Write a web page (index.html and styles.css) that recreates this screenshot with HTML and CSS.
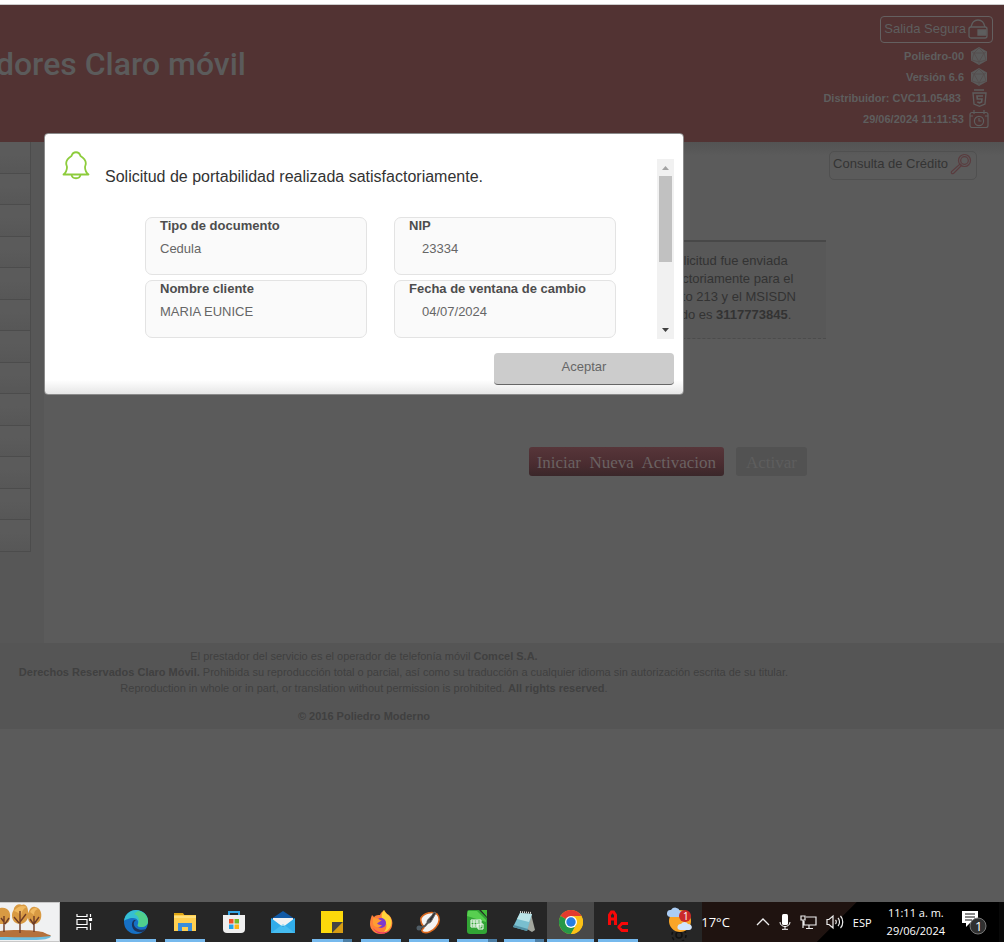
FILE: index.html
```html
<!DOCTYPE html>
<html lang="es">
<head>
<meta charset="utf-8">
<title>Poliedro - Claro móvil</title>
<link rel="stylesheet" href="styles.css">
</head>
<body>
<div class="screen">
  <header class="header">
    <h1 class="title">dores Claro móvil</h1>
    <div class="session">
      <button class="logout" type="button">Salida Segura
        <svg width="20" height="22" viewBox="0 0 20 22" fill="none" stroke="currentColor" stroke-width="1.3"><rect x="1" y="9" width="18" height="11" rx="2"/><path d="M3 9C4 4 7 2 10 2s6 2 7 7"/><path d="M10 12h8v5h-8z" fill="currentColor"/></svg>
      </button>
      <p class="info">Poliedro-00
        <svg width="20" height="18" viewBox="0 0 20 18"><path d="M10 0l8 4.500v9L10 18l-8-4.500v-9z" fill="#5b5b5b"/><path d="M10 1L5 6l5 9 5-9zM3 5l2 1-2 7 7 2 7-2-2-7 2-1M5 6h10M10 15v2" fill="none" stroke="#554b4b" stroke-width=".7"/></svg>
      </p>
      <p class="info">Versión 6.6
        <svg width="20" height="18" viewBox="0 0 20 18"><path d="M10 0l8 4.500v9L10 18l-8-4.500v-9z" fill="#5b5b5b"/><path d="M10 1L5 6l5 9 5-9zM3 5l2 1-2 7 7 2 7-2-2-7 2-1M5 6h10M10 15v2" fill="none" stroke="#554b4b" stroke-width=".7"/></svg>
      </p>
      <p class="info">Distribuidor: CVC11.05483&nbsp;
        <svg width="20" height="18" viewBox="0 0 20 18" fill="none" stroke="#5e5e5e" stroke-width="1.300"><path d="M5 1h10M4 4h13l-1 11-5.500 2.300L5 15z"/><path d="M14 7H8l.3 3H13l-.4 3-2.100.8-2.200-.8" stroke-width="1.600"/></svg>
      </p>
      <p class="info">29/06/2024 11:11:53
        <svg width="20" height="18" viewBox="0 0 20 18" fill="none" stroke="#5e5e5e" stroke-width="1.200"><rect x="1" y="2.500" width="18" height="15" rx="2"/><path d="M1 6h3m12 0h3M5 0v4M15 0v4M10 8v3h2.500"/><circle cx="10" cy="11" r="4.600"/></svg>
      </p>
    </div>
  </header>

  <main class="main">
    <ul class="menu"><li></li><li></li><li></li><li></li><li></li><li></li><li></li><li></li><li></li><li></li><li></li><li></li><li></li></ul>
    <section class="content">
      <div class="tools">
        <button class="credit" type="button">Consulta de Crédito
          <svg width="22" height="22" viewBox="0 0 22 22" fill="none" stroke="#5a3c3f" stroke-width="1.200"><circle cx="14.500" cy="7.500" r="6"/><circle cx="14.500" cy="7.500" r="3.800"/><path d="M10 11l1.500 1.500-8 8c-1.500.7-2.700-.5-2-2z"/></svg>
        </button>
      </div>
      <div class="workspace">
        <div class="notice">
          <span>Su solicitud fue enviada</span>
          <span>satisfactoriamente para el</span>
          <span>producto 213 y el MSISDN</span>
          <span>activado es <b>3117773845</b>.</span>
        </div>
        <div class="actions">
          <button class="start" type="button">Iniciar&nbsp; Nueva&nbsp; Activacion</button>
          <button class="activate" type="button">Activar</button>
        </div>
      </div>
    </section>
  </main>

  <footer class="footer">
    <p>El prestador del servicio es el operador de telefonía móvil <b>Comcel S.A.</b></p>
    <p class="rights"><b>Derechos Reservados Claro Móvil.</b> Prohibida su reproducción total o parcial, así como su traducción a cualquier idioma sin autorización escrita de su titular.</p>
    <p>Reproduction in whole or in part, or translation without permission is prohibited. <b>All rights reserved</b>.</p>
    <p class="copy"><b>© 2016 Poliedro Moderno</b></p>
  </footer>

  <div class="dialog" role="dialog" aria-labelledby="dialog-title">
    <div class="dialog-body">
      <svg class="bell" width="28" height="29" viewBox="0 0 28 29" fill="none" stroke="#8dcc3c" stroke-width="1.800" stroke-linejoin="round"><path d="M1.500 23.500c2.500-2 3.500-4 3.500-7.500 0-1-1-2-.8-4C4.500 8 7 6.500 9.500 5 11 0 17 0 18.500 5c2.500 1.500 5 3 5.300 7 .2 2-.8 3-.8 4 0 3.500 1 5.500 3.500 7.500z"/><path d="M9.500 23.500c.5 5 8.500 5 9 0"/></svg>
      <div class="dialog-content">
        <h2 class="dialog-title" id="dialog-title">Solicitud de portabilidad realizada satisfactoriamente.</h2>
        <dl class="fields">
          <div class="field"><dt>Tipo de documento</dt><dd>Cedula</dd></div>
          <div class="field indent"><dt>NIP</dt><dd>23334</dd></div>
          <div class="field"><dt>Nombre cliente</dt><dd>MARIA EUNICE</dd></div>
          <div class="field indent"><dt>Fecha de ventana de cambio</dt><dd>04/07/2024</dd></div>
        </dl>
      </div>
      <div class="scrollbar">
        <svg width="17" height="17" viewBox="0 0 17 17"><path d="M5 11h7L8.500 7z" fill="#a3a3a3"/></svg>
        <div class="thumb"></div>
        <svg class="down" width="17" height="17" viewBox="0 0 17 17"><path d="M5 6h7l-3.500 4z" fill="#404040"/></svg>
      </div>
    </div>
    <button class="accept" type="button">Aceptar</button>
  </div>

  <nav class="taskbar">
    <svg class="trees" width="60" height="40" viewBox="0 0 60 40"><path d="M0 0h60v40H0z" fill="#c8c8c8"/><path d="M0 1h59v38H0z" fill="#f0f1f2"/><path d="M0 34h51c-1 3-8 4-18 4H0z" fill="#6fbfe0"/><path d="M0 29c15-2 35-1 43 1 3 2 8 3 8 4-12 2-32 1-51 1z" fill="#b5713c"/><path d="M0 6c8-2 11 5 10 9 0 5-3 7-6 7H0zM12 14c0-5 2-5 2-8 3-5 6-4 8-3 4-2 6 3 6 6 2 8-3 13-8 13-4 0-8-3-8-8zM28 15c0-6 3-11 7-10 6 1 7 7 6 11-1 4-4 6-7 6-4 0-6-3-6-7z" fill="#d89a43"/><path d="M14 9c4-5 8-6 13-4-3 1-5 3-6 9-2-3-4-4-7-5zM30 10c2-4 5-5 8-3-3 1-4 3-4 6z" fill="#f0b961"/><path d="M4 30V14M5 22l4-6M4 20l-3-4M20 31V9M19 21l-5-6M20 20l6-8M34 30V14M34 22l5-7M34 23l-4-6" fill="none" stroke="#6f3c26" stroke-width="1.400"/></svg>
    <button class="task-view" type="button" aria-label="Vista de tareas"><svg width="17" height="16" viewBox="0 0 17 16" fill="none" stroke="#fff" stroke-width="1.200"><path d="M1 0v2.500h10V0M1 16v-2.500h10V16M1 5.500h10v5H1zM14.500 0v3M14.500 9v7"/><path d="M13.500 4.500h2v2h-2z" fill="#fff"/></svg></button>
    <div class="apps">
      <button class="app open" type="button" aria-label="Edge"><svg width="24" height="24" viewBox="0 0 24 24"><circle cx="12" cy="12" r="12" fill="#1670c5"/><path d="M0 11C1 4 6 0 12 0c7 0 12 5 12 11 0 4-3 6-7 6-3 0-4-1-3-3 1-3-1-6-5-6-4 0-8 2-9 3z" fill="#35bfd3"/><path d="M14 1c6 1 10 5 10 10 0 4-3 6-7 6-3 0-4-1-3-3 2-4 1-8-4-10z" fill="#5ad676" opacity=".75"/><path d="M10 10c-4 3-2 11 4 12 4 .7 7-1 8-3-5 2-11 0-12-4-.5-2 0-4 2-5z" fill="#1b335c"/></svg></button>
      <button class="app open" type="button" aria-label="Explorador"><svg width="24" height="24" viewBox="0 0 24 24"><path d="M1 3h9l2 3H1z" fill="#dda514"/><path d="M1 5h22v16H1z" fill="#ffcf50"/><path d="M1 6h22v2H1z" fill="#ffe07b"/><path d="M5 21v-8h14v8h-4v-4H9v4z" fill="#398ddb"/></svg></button>
      <button class="app" type="button" aria-label="Store"><svg width="24" height="24" viewBox="0 0 24 24"><path d="M7 6V2h10v4" fill="none" stroke="#33a5e5" stroke-width="2"/><path d="M1 5h22v14q0 4-4 4H5q-4 0-4-4z" fill="#efefef"/><path d="M7 9h4.500v4.500H7z" fill="#ef5127"/><path d="M12.500 9H17v4.500h-4.500z" fill="#75b928"/><path d="M7 14.500h4.500V19H7z" fill="#24a5e8"/><path d="M12.500 14.500H17V19h-4.500z" fill="#fdb515"/></svg></button>
      <button class="app" type="button" aria-label="Correo"><svg width="26" height="24" viewBox="0 0 26 24"><path d="M1 9l12-8 12 8v13H1z" fill="#1059a5"/><path d="M3 8h20v8H3z" fill="#f1f1f1"/><path d="M1 8l12 9 12-9v15H1z" fill="#31adea"/><path d="M1 23l12-9 12 9z" fill="#54c6f3" opacity=".6"/></svg></button>
      <button class="app open stack" type="button" aria-label="Notas"><svg width="24" height="24" viewBox="0 0 24 24"><path d="M1 1h22v22H1z" fill="#fdd90b"/><path d="M12 23h11V12z" fill="#d79d14"/><path d="M12 23V12h11z" fill="#444"/></svg></button>
      <button class="app open" type="button" aria-label="Firefox"><svg width="24" height="24" viewBox="0 0 24 24"><path d="M3 5l2 2c2-2 4-2 6-2 1-3 4-4 4-5l3 4 2 1c3 3 4 7 3 11-1 5-6 8-11 8C5 24 1 19 1 14c0-4 1-6 2-9z" fill="#ff803a"/><path d="M15 0c1 4 6 5 7 9 2 6-2 12-7 13 4-4 3-11-2-14-1-2 0-6 2-8z" fill="#ffd43b"/><path d="M4 18c3 6 11 8 17 2-3 3-12 4-17-2z" fill="#e92b70"/><circle cx="12" cy="13" r="5" fill="#7d3bcf"/><path d="M4 8c4 0 6 1 9 3-3 0-3 2-5 2 1 2 3 2 5 2-3 4-9 2-9-2z" fill="#ff9d32"/></svg></button>
      <button class="app open" type="button" aria-label="Herramienta"><svg width="26" height="24" viewBox="0 0 26 24"><path d="M5 8C8 3 16 1 21 4c3 3 3 9-1 13-3 4-9 7-13 5-3-2 1-3 1-5-2-2-4-5-3-9z" fill="#f4f4f4" stroke="#db681d" stroke-width="1.600"/><path d="M18 2l2 1-4 7c-1 3-4 4-5 2 0-3 4-4 7-10z" fill="#303336" stroke="#666"/><path d="M3 18l6-2 5-6" fill="none" stroke="#555" stroke-width="2"/><circle cx="3" cy="18" r="2.500" fill="#505d66"/></svg></button>
      <button class="app open stack" type="button" aria-label="Calc"><svg width="24" height="24" viewBox="0 0 24 24"><path d="M4 0h10l8 8v13q0 3-3 3H5q-3 0-3-3V3q0-3 2-3z" fill="#32a535"/><path d="M3 1h9l9 9v2L2 6z" fill="#58cf50"/><path d="M16 0h6v7z" fill="#42bd39"/><path d="M6 10h10v7H6zM6 12h10M6 15h10M9 10v7M12 10v7M13 14h5v5h-5z" fill="none" stroke="#fff"/></svg></button>
      <button class="app open stack" type="button" aria-label="Bloc de notas"><svg width="24" height="24" viewBox="0 0 24 24"><path d="M19 4l4 16-3 2-5-3z" fill="#a3a69e"/><path d="M8 3l12 1-5 17-14-4z" fill="#79bfcf"/><path d="M8 3l12 1-3 8L5 9z" fill="#bce4e8"/><path d="M2 15l14 4-1 2-14-4z" fill="#518fa3"/><path d="M8 2l12 1" stroke="#d7d8d3" stroke-width="2" stroke-dasharray="1 1"/></svg></button>
      <button class="app open active" type="button" aria-label="Chrome"><svg width="24" height="24" viewBox="0 0 24 24"><circle cx="12" cy="12" r="12" fill="#fbc116"/><path d="M12 12L1.600 6A12 12 0 0 1 22.400 6z" fill="#e33b2e"/><path d="M12 12L1.600 6a12 12 0 0 0 10.400 18l5-9z" fill="#279847"/><path d="M12 6h10.400A12 12 0 0 1 12 24l5-9z" fill="#fbc116"/><circle cx="12" cy="12" r="6" fill="#fff"/><circle cx="12" cy="12" r="4.700" fill="#287de1"/></svg></button>
      <button class="app open" type="button" aria-label="AC"><svg width="24" height="24" viewBox="0 0 24 24" fill="none" stroke="#f80808" stroke-width="3"><path d="M3.500 15V5l2-3h2l2 3v10M4 9h5M22 13.500h-6l-3 3v1l3 3h6"/></svg></button>
    </div>
    <div class="tray">
      <div class="weather"><svg width="26" height="38" viewBox="0 0 26 38"><g fill="none" stroke="#111" stroke-width="1.500"><circle cx="12" cy="32" r="3"/><circle cx="12" cy="32" r="7" stroke-dasharray="3 2.500"/></g><circle cx="13" cy="18" r="11" fill="#f9a527"/><path d="M3 14a3.500 3.500 0 0 1 1-7 5 5 0 0 1 9 1c4 0 4 6 0 6z" fill="#abcdf4"/><path d="M13 27a3 3 0 0 1 1-6 4 4 0 0 1 7 0c5 0 5 6 1 6z" fill="#d1e5fc"/><circle cx="18" cy="13" r="6" fill="#cb2929"/><text x="16" y="17" class="badge">1</text></svg><span>17°C</span></div>
      <svg width="14" height="14" viewBox="0 0 14 14" fill="none" stroke="#eee" stroke-width="1.300"><path d="M1 10l6-6 6 6"/></svg>
      <svg width="12" height="16" viewBox="0 0 12 16"><rect x="3" width="6" height="11" rx="1.500" fill="#fff"/><path d="M1 8c0 6 10 6 10 0M6 12v3M3 15.300h6" fill="none" stroke="#fff"/></svg>
      <svg width="17" height="16" viewBox="0 0 17 16" fill="none" stroke="#eee" stroke-width="1.200"><path d="M6 3h10v8H4V7M9 11v3M6 14.500h7M1 2h4v4H1zM3 6v8"/></svg>
      <svg width="18" height="16" viewBox="0 0 18 16" fill="none" stroke="#eee" stroke-width="1.200"><path d="M1 5.500h2L7 2v12l-4-3.500H1zM9.500 6c1 1 1 3 0 4M12 4c2 2 2 6 0 8M14.500 2c3 3 3 9 0 12"/></svg>
      <span class="lang">ESP</span>
      <time class="clock">11:11 a. m.<br>29/06/2024</time>
      <svg width="26" height="26" viewBox="0 0 26 26"><path d="M1 2h16v12H9l-4 4v-4H1z" fill="#fff"/><path d="M4 5h10M4 8h10M4 11h7" stroke="#111"/><circle cx="17" cy="17" r="8" fill="#303030" stroke="#777"/><text x="14" y="22" class="count">1</text></svg>
    </div>
  </nav>
</div>
</body>
</html>
```
FILE: styles.css
```css
* { box-sizing: border-box; }
body { margin: 0; background: #5b5b5b; font-family: "Liberation Sans", Arial, sans-serif; font-size: 13px; }
button { font: inherit; margin: 0; padding: 0; border: 0; background: none; color: inherit; }
h1, h2, p, ul, dl, dd { margin: 0; padding: 0; }
svg { display: block; flex: none; }

.screen { position: relative; min-height: 100vh; display: flex; flex-direction: column; overflow: hidden; border-top: 4px solid #fff; }

.header { display: flex; justify-content: space-between; min-height: 138px; padding-right: 11px; background: #523333; border-top: 1px solid #ccc; color: #5e5e5e; }
.title { display: flex; justify-content: flex-end; width: 246px; padding-top: 40px; white-space: nowrap; font: 500 32px/38px Roboto, sans-serif; color: #5b5b5b; }
.session { display: flex; flex-direction: column; align-items: flex-end; padding-top: 11px; }
.logout { display: flex; align-items: center; gap: 2px; height: 27px; margin-bottom: 2px; padding: 0 4px 2px 3px; border: 1px solid #646060; border-radius: 4px; }
.info { display: flex; align-items: center; gap: 5px; height: 21px; padding-right: 4px; font-size: 11px; font-weight: bold; }

.main { display: flex; gap: 13px; min-height: 501px; background: linear-gradient(90deg, #575757 44px, #5b5b5b 44px); }
.menu { align-self: flex-start; display: grid; grid-auto-rows: 1fr; width: 31px; min-height: 410px; border-right: 1px solid #4c4c4c; list-style: none; }
.menu li { border-bottom: 1px solid #4c4c4c; background: linear-gradient(#5b5b5b 40%, #575757); }
.content { flex: 1; background: linear-gradient(#535353, #5b5b5b 14px); }
.tools { display: flex; justify-content: flex-end; padding: 9px 27px 60px 0; }
.credit { display: flex; align-items: center; gap: 2px; height: 29px; padding: 0 4px 4px 3px; border: 1px solid #505050; border-radius: 5px; color: #343434; }
.workspace { display: flex; flex-direction: column; align-items: flex-end; max-width: 782px; }
.notice { display: flex; flex-direction: column; width: 214px; min-height: 99px; padding: 10px 0; border-top: 2px solid #484848; border-bottom: 1px dashed #4c4c4c; background: #585858; color: #333; line-height: 18px; text-align: center; }
.actions { display: flex; gap: 12px; padding: 108px 19px 0 0; font: 17px "Liberation Serif", serif; }
.start, .activate { height: 29px; padding: 3px 10px 0; border-radius: 3px; }
.start { padding: 3px 8px 0; background: linear-gradient(#57363a, #4a2c30 60%, #3a272a); color: #6a6262; }
.activate { background: #525252; color: #5e5e5e; }

.footer { width: 100%; min-height: 86px; padding: 5px 0; overflow: hidden; background: #555; color: #404040; font-size: 11px; line-height: 16px; white-space: nowrap; }
.footer p { width: 728px; text-align: center; }
.footer .rights { width: 788px; text-align: right; }
.footer .copy { padding-top: 12px; }

.dialog { position: absolute; top: 129px; left: 44px; width: 640px; display: flex; flex-direction: column; padding: 17px 9px 9px 17px; border: 1px solid #8a8a8a; border-radius: 4px; background: linear-gradient(0deg, #e6e6e6, #fff 14px); }
.dialog-body { display: flex; }
.dialog-content { flex: 1; padding-left: 15px; }
.dialog-title { margin: 16px 0 30px; font-size: 16px; font-weight: normal; line-height: 20px; color: #333; }
.fields { display: grid; grid-template-columns: 222px 222px; gap: 5px 27px; padding-left: 40px; }
.field { height: 58px; padding-left: 14px; border: 1px solid #e3e3e3; border-radius: 7px; background: #fafafa; }
.field dt { font-weight: bold; line-height: 16px; color: #4d4d4d; }
.field dd { padding-top: 5px; line-height: 20px; color: #666; }
.indent dd { padding-left: 13px; }
.scrollbar { display: flex; flex-direction: column; align-items: center; width: 17px; height: 180px; margin-top: 8px; background: #f1f1f1; }
.thumb { width: 13px; height: 86px; background: #c1c1c1; }
.down { margin-top: auto; }
.accept { align-self: flex-end; width: 180px; height: 32px; margin-top: 14px; padding-bottom: 4px; border-bottom: 1px solid #666; border-radius: 4px; background: #ccc; color: #666; }

.taskbar { display: flex; align-items: center; height: 40px; margin-top: auto; background: #262626; color: #fff; font-family: "Open Sans", "Noto Sans", sans-serif; }
.task-view { width: 51px; height: 40px; padding-left: 16px; }
.apps { display: grid; grid-template-columns: repeat(6, 49px) 48px repeat(4, 47px); }
.app { display: grid; place-items: center; height: 40px; background: linear-gradient(#76b9ed, #76b9ed) bottom / 0 3px no-repeat; }
.app.open { background-size: 40px 3px; }
.app.stack { background-image: linear-gradient(90deg, #76b9ed 31px, #4c7ea5 31px); }
.app.active { background-color: #494949; background-size: 100% 3px; }
.tray { flex: 1; display: flex; align-items: center; justify-content: flex-end; gap: 9px; height: 40px; padding-right: 12px; border-right: 5px solid #080808; background: linear-gradient(90deg, #262626 61px, transparent 61px), linear-gradient(135deg, #1f1310 152px, #000 153px); }
.weather { display: flex; align-items: center; gap: 8px; margin-right: 17px; font-size: 13px; }
.lang, .clock { font-size: 11px; }
.clock { margin: 0 7px 0 6px; line-height: 18px; text-align: center; white-space: nowrap; }
.badge { fill: #fff; font-size: 10px; }
.count { fill: #fff; font-size: 13px; }
```
